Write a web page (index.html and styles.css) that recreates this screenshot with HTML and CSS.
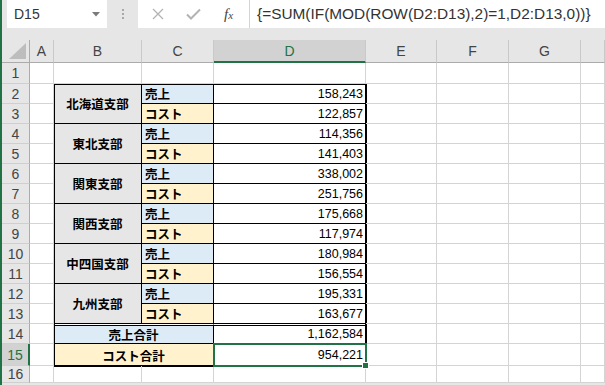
FILE: index.html
```html
<!DOCTYPE html>
<html lang="ja">
<head>
<meta charset="utf-8">
<title>Excel</title>
<link rel="stylesheet" href="styles.css">
</head>
<body>
<div class="app">
  <div class="fbar">
    <div class="namebox"><span>D15</span><svg class="caret" width="8" height="5" viewBox="0 0 8 5"><polygon points="0,0 8,0 4,4.5" fill="#7a7a7a"/></svg></div>
    <div class="grip"><i></i><i></i><i></i></div>
    <div class="formula">
      <div class="tools">
        <svg class="ic-x" width="12" height="12" viewBox="0 0 12 12"><path d="M1 1L11 11M11 1L1 11" stroke="#b3b3b3" stroke-width="1.3" fill="none"/></svg>
        <svg class="ic-ok" width="15" height="12" viewBox="0 0 15 12"><path d="M1 6.5L5 10.5L14 1.5" stroke="#b3b3b3" stroke-width="2" fill="none"/></svg>
        <span class="fx">f<span class="fxs">x</span></span>
      </div>
      <div class="ftext">{=SUM(IF(MOD(ROW(D2:D13),2)=1,D2:D13,0))}</div>
    </div>
  </div>
  <div class="sheet">
    <div class="tb">
      <div class="br">北海道支部</div><div class="lbl s">売上</div><div class="num">158,243</div><div class="lbl k">コスト</div><div class="num">122,857</div>
      <div class="br">東北支部</div><div class="lbl s">売上</div><div class="num">114,356</div><div class="lbl k">コスト</div><div class="num">141,403</div>
      <div class="br">関東支部</div><div class="lbl s">売上</div><div class="num">338,002</div><div class="lbl k">コスト</div><div class="num">251,756</div>
      <div class="br">関西支部</div><div class="lbl s">売上</div><div class="num">175,668</div><div class="lbl k">コスト</div><div class="num">117,974</div>
      <div class="br">中四国支部</div><div class="lbl s">売上</div><div class="num">180,984</div><div class="lbl k">コスト</div><div class="num">156,554</div>
      <div class="br">九州支部</div><div class="lbl s">売上</div><div class="num">195,331</div><div class="lbl k">コスト</div><div class="num">163,677</div>
      <div class="tot s dbl">売上合計</div><div class="num dbl">1,162,584</div>
      <div class="tot k last">コスト合計</div><div class="num last sel">954,221<span class="selbox"><span class="handle"></span></span></div>
    </div>

    <div class="corner"><svg width="28" height="22" viewBox="0 0 28 22"><polygon points="7,19 24,19 24,3" fill="#bdbdbd"/></svg></div>
    <div class="ch">A</div><div class="ch">B</div><div class="ch">C</div><div class="ch on">D</div><div class="ch">E</div><div class="ch">F</div><div class="ch">G</div><div class="ch"></div>

    <div class="rh">1</div><div class="c"></div><div class="c"></div><div class="c"></div><div class="c"></div><div class="c"></div><div class="c"></div><div class="c"></div><div class="c"></div>
    <div class="rh">2</div><div class="c"></div><div class="c"></div><div class="c"></div><div class="c"></div><div class="c"></div>
    <div class="rh">3</div><div class="c"></div><div class="c"></div><div class="c"></div><div class="c"></div><div class="c"></div>
    <div class="rh">4</div><div class="c"></div><div class="c"></div><div class="c"></div><div class="c"></div><div class="c"></div>
    <div class="rh">5</div><div class="c"></div><div class="c"></div><div class="c"></div><div class="c"></div><div class="c"></div>
    <div class="rh">6</div><div class="c"></div><div class="c"></div><div class="c"></div><div class="c"></div><div class="c"></div>
    <div class="rh">7</div><div class="c"></div><div class="c"></div><div class="c"></div><div class="c"></div><div class="c"></div>
    <div class="rh">8</div><div class="c"></div><div class="c"></div><div class="c"></div><div class="c"></div><div class="c"></div>
    <div class="rh">9</div><div class="c"></div><div class="c"></div><div class="c"></div><div class="c"></div><div class="c"></div>
    <div class="rh">10</div><div class="c"></div><div class="c"></div><div class="c"></div><div class="c"></div><div class="c"></div>
    <div class="rh">11</div><div class="c"></div><div class="c"></div><div class="c"></div><div class="c"></div><div class="c"></div>
    <div class="rh">12</div><div class="c"></div><div class="c"></div><div class="c"></div><div class="c"></div><div class="c"></div>
    <div class="rh">13</div><div class="c"></div><div class="c"></div><div class="c"></div><div class="c"></div><div class="c"></div>
    <div class="rh">14</div><div class="c"></div><div class="c"></div><div class="c"></div><div class="c"></div><div class="c"></div>
    <div class="rh on">15</div><div class="c"></div><div class="c"></div><div class="c"></div><div class="c"></div><div class="c"></div>
    <div class="rh">16</div><div class="c"></div><div class="c"></div><div class="c"></div><div class="c"></div><div class="c"></div><div class="c"></div><div class="c"></div><div class="c"></div>
  </div>
</div>
</body>
</html>
```

FILE: styles.css
```css
html, body {
  margin: 0;
  padding: 0;
}

body {
  font-family: "Liberation Sans", "Noto Sans CJK JP", sans-serif;
  color: #333;
}

.app {
  width: 605px;
  height: 385px;
  overflow: hidden;
  box-sizing: border-box;
  border-left: 2px solid #217346;
  background: #e6e6e6;
}

/* formula bar */
.fbar {
  display: flex;
  height: 28px;
  padding-left: 5px;
  margin-bottom: 12px;
}

.namebox {
  width: 100px;
  box-sizing: border-box;
  background: #fff;
  display: flex;
  align-items: center;
  justify-content: space-between;
  padding: 0 7px 0 7px;
  font-size: 14px;
  color: #333;
}

.caret {
  margin-top: 1px;
}

.grip {
  width: 31px;
  display: flex;
  flex-direction: column;
  align-items: center;
  justify-content: center;
  gap: 2px;
}

.grip i {
  display: block;
  width: 2px;
  height: 2px;
  background: #a8a8a8;
}

.formula {
  flex: 1;
  display: flex;
  background: #fff;
}

.tools {
  width: 112px;
  box-sizing: border-box;
  border-right: 1px solid #d4d4d4;
  display: flex;
  align-items: center;
  padding-left: 14px;
}

.ic-ok {
  margin-left: 22px;
}

.fx {
  margin-left: 23px;
  font-family: "Liberation Serif", serif;
  font-style: italic;
  font-size: 15px;
  color: #444;
}

.fxs {
  font-size: 11px;
}

.ftext {
  padding-left: 7px;
  line-height: 28px;
  font-size: 15.4px;
  color: #333;
  white-space: nowrap;
}

/* sheet */
.sheet {
  display: grid;
  grid-template-columns: 28px 24px 88px 72px 152px 71px 72px 72px 1fr;
  grid-template-rows: 23px 21px repeat(13, 20px) 22px 1fr;
  background: #fff;
  font-size: 14px;
}

.corner {
  background: #e6e6e6;
  border-right: 1px solid #ababab;
  border-bottom: 1px solid #ababab;
}

.corner svg {
  display: block;
}

.ch {
  background: #e6e6e6;
  border-right: 1px solid #c9c9c9;
  border-bottom: 1px solid #ababab;
  display: flex;
  align-items: center;
  justify-content: center;
  color: #444;
}

.ch.on {
  background: #d2d2d2;
  color: #217346;
  border-bottom: 2px solid #217346;
}

.rh {
  background: #e6e6e6;
  border-right: 1px solid #ababab;
  border-bottom: 1px solid #cfcfcf;
  display: flex;
  align-items: center;
  justify-content: center;
  color: #444;
}

.rh.on {
  background: #d2d2d2;
  color: #217346;
  border-right: 2px solid #217346;
}

.c {
  border-right: 1px solid #d4d4d4;
  border-bottom: 1px solid #d4d4d4;
}

/* data table B2:D15 */
.tb {
  grid-column: 3 / 6;
  grid-row: 3 / 17;
  display: grid;
  grid-template-columns: 88px 72px 152px;
  grid-template-rows: repeat(13, 20px) 22px;
  outline: 2px solid #000;
  outline-offset: -1px;
  background: #fff;
  font-size: 12.5px;
  color: #000;
}

.br {
  grid-row: span 2;
  background: #e7e6e6;
  border-right: 1px solid #000;
  border-bottom: 1px solid #000;
  display: flex;
  align-items: center;
  justify-content: center;
  font-weight: 700;
}

.lbl {
  border-right: 1px solid #000;
  border-bottom: 1px solid #000;
  display: flex;
  align-items: center;
  padding-left: 3px;
  font-weight: 700;
}

.s {
  background: #ddebf7;
}

.k {
  background: #fff2cc;
}

.num {
  border-bottom: 1px solid #000;
  display: flex;
  align-items: center;
  justify-content: flex-end;
  padding-right: 3px;
  font-family: "Liberation Sans", sans-serif;
}

.tot {
  grid-column: span 2;
  border-right: 1px solid #000;
  border-bottom: 1px solid #000;
  display: flex;
  align-items: center;
  justify-content: center;
  font-weight: 700;
}

.dbl {
  border-top: 1px solid #fff;
  box-shadow: inset 0 1px 0 #000;
}

.last {
  border-bottom: none;
}

.sel {
  position: relative;
}

.selbox {
  position: absolute;
  top: -1px;
  left: -1px;
  right: -1px;
  bottom: -1px;
  border: 2px solid #217346;
  z-index: 2;
}

.handle {
  position: absolute;
  right: -4px;
  bottom: -4px;
  width: 5px;
  height: 5px;
  background: #217346;
  border: 1px solid #fff;
}
```
